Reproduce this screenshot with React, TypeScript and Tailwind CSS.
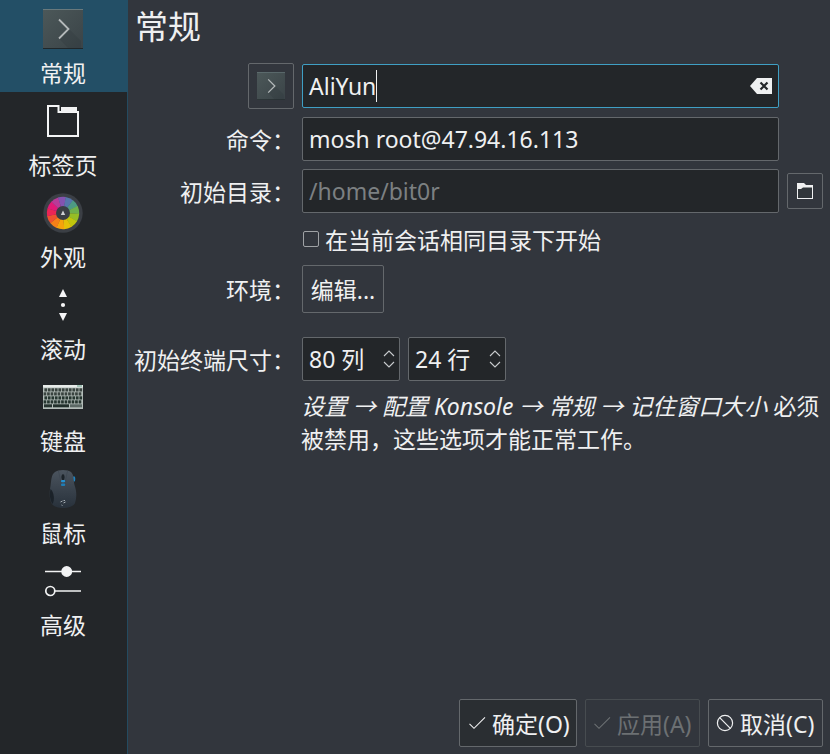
import type { ReactNode } from "react";

function TerminalIcon({ size }: { size: number }) {
  return (
    <svg width={size} height={size} viewBox="0 0 40 40">
      <defs>
        <linearGradient id="term" x1="0" y1="0" x2="1" y2="1">
          <stop offset="0" stopColor="#4c5859" />
          <stop offset="1" stopColor="#3a4347" />
        </linearGradient>
      </defs>
      <rect width="40" height="40" fill="url(#term)" />
      <path d="M16 29.5 L26 20 L38 32 V39 H25 Z" fill="#2b3236" opacity="0.22" />
      <path d="M0 .5H40" stroke="#69797c" />
      <path d="M0 39.5H40" stroke="#20272a" />
      <path d="M16 10.5 L25.5 20 L16 29.5" fill="none" stroke="#b4b9ba" strokeWidth="1.8" />
    </svg>
  );
}

function TabIcon() {
  return (
    <svg width="40" height="40" viewBox="0 0 40 40">
      <path d="M5 5H15.500V11H35V35H5Z" fill="none" stroke="#f4f5f6" strokeWidth="2" />
      <rect x="18" y="6" width="16" height="5" fill="#f0f1f2" />
    </svg>
  );
}

const WHEEL = [
  "#4d9a83", "#6fb04c", "#96bd25", "#c0c60c", "#e4c008", "#f5a30c",
  "#f58018", "#ef5130", "#ec2455", "#e01a78", "#b93a98", "#8353b0", "#5676ac",
];

function WheelIcon() {
  const step = (2 * Math.PI) / WHEEL.length;
  const at = (a: number) => `${20 + 16.2 * Math.cos(a)} ${20 + 16.2 * Math.sin(a)}`;
  // The wheel's first wedge sits at the upper right.
  const start = -Math.PI / 3.4;
  return (
    <svg width="40" height="40" viewBox="0 0 40 40">
      <circle cx="20" cy="20" r="19.700" fill="#3b3f45" />
      {WHEEL.map((color, i) => (
        <path
          key={color}
          d={`M20 20 L${at(start + i * step)} A16.2 16.2 0 0 1 ${at(start + (i + 1) * step + 0.02)} Z`}
          fill={color}
        />
      ))}
      <circle cx="20" cy="20" r="7" fill="#3a3e44" />
      <path d="M20 17.500L22.200 22H17.800Z" fill="#cfd1d3" />
    </svg>
  );
}

function ScrollIcon() {
  return (
    <svg width="40" height="40" viewBox="0 0 40 40" fill="#f6f6f7">
      <path d="M20 4L24 12H16Z" />
      <circle cx="20" cy="20" r="2.100" />
      <path d="M20 36L24 28H16Z" />
    </svg>
  );
}

function KeyboardIcon() {
  const rows = [0, 1, 2, 3];
  return (
    <svg width="40" height="40" viewBox="0 0 40 40">
      <rect x="0" y="8" width="40" height="24" fill="#b3bdb9" />
      <rect x="0" y="8" width="40" height="2.500" fill="#e8ecea" />
      <path d="M34 9H39" stroke="#5f9c85" />
      {rows.map((r) => (
        <g key={r} fill={r > 1 ? "#25352f" : "#39433f"}>
          {Array.from({ length: 11 }, (_, c) => (
            <rect key={c} x={1 + c * 3.5 - (r % 2) * 0.8 + 0.4} y={11.300 + r * 4} width="2.700" height="3.200" />
          ))}
        </g>
      ))}
      <rect x="1" y="27.300" width="8" height="3" fill="#26332f" />
      <rect x="10" y="27.300" width="16" height="3" fill="#22302b" />
      <rect x="27" y="27.300" width="12" height="3" fill="#5c6965" />
    </svg>
  );
}

function MouseIcon() {
  return (
    <svg width="40" height="40" viewBox="0 0 40 40">
      <defs>
        <linearGradient id="mouse" x1="0" y1="0" x2="0" y2="1">
          <stop offset="0" stopColor="#4b545e" />
          <stop offset="1" stopColor="#28313b" />
        </linearGradient>
      </defs>
      <path d="M30 7.500h1.500c1 0 1 4.500 0 5H30Z" fill="#1d84c2" />
      <path
        d="M12 3C15 .3 25 .3 28 3C31 6 30.500 11 31.500 16C33.600 22 34 28 32 34C29 40.500 13 40.500 9 35C6 31 6.500 22 7.500 17C8.500 11 8 6 12 3Z"
        fill="url(#mouse)"
      />
      <path d="M7.500 20C11 23 12 31 9.500 35C6.500 31 6.500 24 7.500 20Z" fill="#1b2229" />
      <path d="M15.500 2L18 14V19H22V14L24.500 2" fill="none" stroke="#3d4650" strokeWidth=".8" />
      <path d="M20 5C22 6 22 9 20.800 11H19.200C18 9 18 6 20 5Z" fill="#1c2329" />
      <rect x="18" y="11" width="4.200" height="2.300" rx="1" fill="#2492d2" />
      <rect x="18" y="14.500" width="4.200" height="2.500" rx="1" fill="#207db5" />
      <path d="M17.500 33l2-1M20.500 34l2-1M18.500 36l1 .5M20.500 31.500h1.500" stroke="#a4abb1" />
    </svg>
  );
}

function SlidersIcon() {
  return (
    <svg width="40" height="40" viewBox="0 0 40 40" stroke="#f2f3f4" strokeWidth="1.700">
      <path d="M2 10.500H38M12 30H38" />
      <circle cx="23.700" cy="10.500" r="4.600" fill="#f2f3f4" />
      <circle cx="7.300" cy="30" r="4.500" fill="none" />
    </svg>
  );
}

function CheckIcon() {
  return (
    <svg width="18" height="18" viewBox="0 0 18 18" fill="none" stroke="currentColor" strokeWidth="1.100">
      <path d="M1.500 9.800L6 14.300L17 3.300" />
    </svg>
  );
}

function CancelIcon() {
  return (
    <svg width="18" height="18" viewBox="0 0 18 18" fill="none" stroke="currentColor" strokeWidth="1.200">
      <circle cx="9" cy="9" r="7.600" />
      <path d="M3.700 3.700L14.300 14.300" />
    </svg>
  );
}

const PAGES: { label: string; icon: ReactNode }[] = [
  { label: "常规", icon: <TerminalIcon size={40} /> },
  { label: "标签页", icon: <TabIcon /> },
  { label: "外观", icon: <WheelIcon /> },
  { label: "滚动", icon: <ScrollIcon /> },
  { label: "键盘", icon: <KeyboardIcon /> },
  { label: "鼠标", icon: <MouseIcon /> },
  { label: "高级", icon: <SlidersIcon /> },
];

function Row({ label, className, children }: { label?: string; className: string; children: ReactNode }) {
  return (
    <div className={`flex items-center ${className}`}>
      <div className="mr-[7px] w-[161px] shrink-0 whitespace-nowrap pt-0.5 text-right">{label}</div>
      {children}
    </div>
  );
}

function Field({ className, children }: { className: string; children: ReactNode }) {
  return (
    <div className={`flex h-11 items-center rounded-[2px] border bg-[#232629] px-1.5 ${className}`}>
      {children}
    </div>
  );
}

function Spin({ value }: { value: string }) {
  return (
    <Field className="w-[98px] justify-between border-[#64686c] pr-[4px]">
      <span className="whitespace-nowrap pt-px">{value}</span>
      <svg width="12" height="20" viewBox="0 0 12 20" fill="none" stroke="#c9cccf" strokeWidth="1.100">
        <path d="M1 7L6 2L11 7M1 13L6 18L11 13" />
      </svg>
    </Field>
  );
}

function Button({ className, icon, children }: { className: string; icon: ReactNode; children: ReactNode }) {
  return (
    <div className={`flex h-12 items-center gap-[6px] whitespace-nowrap rounded-[2px] border ${className}`}>
      {icon}
      <span className="pt-0.5">{children}</span>
    </div>
  );
}

export default function App() {
  return (
    <div className="flex h-[754px] w-[830px] overflow-hidden bg-[#32363d] font-['Noto_Sans','Noto_Sans_CJK_SC',sans-serif] text-[23px] leading-[33px] text-[#eff0f1]">
      <nav className="w-32 shrink-0 border-r border-[#244b60] bg-[#232629]">
        {PAGES.map((page, i) => (
          <div
            key={page.label}
            className={`flex h-[92px] flex-col items-center pt-[9px] ${i === 0 ? "-mr-px bg-[#234f66] pr-0.5" : "pr-px"}`}
          >
            {page.icon}
            <div className="mt-2">{page.label}</div>
          </div>
        ))}
      </nav>
      <main className="flex min-w-0 flex-1 flex-col pl-[6px] pr-[7px]">
        <h1 className="h-[63px] pt-[3px] pl-px text-[33px] leading-[48px]">常规</h1>
        <div className="flex h-[46px] items-center">
          <div className="ml-[114px] mr-2 flex size-[46px] items-center justify-center rounded-[2px] border border-[#64686c]">
            <TerminalIcon size={28} />
          </div>
          <Field className="w-[477px] border-[#3f9fc4]">
            <span>AliYun</span>
            <span className="h-8 w-px bg-[#eff0f1]" />
            <svg className="ml-auto" width="22" height="16" viewBox="0 0 22 16">
              <path d="M0 8L7 0H22V16H7Z" fill="#eff0f1" />
              <path d="M10.500 4.500L17.500 11.500M17.500 4.500L10.500 11.500" stroke="#232629" strokeWidth="2.200" />
            </svg>
          </Field>
        </div>
        <Row label="命令：" className="mt-2">
          <Field className="w-[477px] border-[#64686c]">mosh root@47.94.16.113</Field>
        </Row>
        <Row label="初始目录：" className="mt-2">
          <Field className="w-[477px] border-[#64686c] text-[#7c8082]">/home/bit0r</Field>
          <div className="ml-2 flex size-9 items-center justify-center rounded-[2px] border border-[#64686c]">
            <svg width="16" height="16" viewBox="0 0 16 16">
              <path d="M0 0H7L9 2H16V16H0Z" fill="#eff0f1" />
              <path d="M1 6H4L6 4.500H15V15H1Z" fill="#31363b" />
            </svg>
          </div>
        </Row>
        <Row className="mt-[11px] h-8">
          <span className="mb-0.5 ml-px mr-[6px] size-4 rounded-[2px] border border-[#9fa2a5]" />
          <span>在当前会话相同目录下开始</span>
        </Row>
        <Row label="环境：" className="mt-[9px]">
          <div className="flex h-12 w-[82px] items-center justify-center rounded-[2px] border border-[#64686c] pt-0.5">编辑...</div>
        </Row>
        <Row label="初始终端尺寸：" className="mt-6">
          <div className="flex gap-2">
            <Spin value="80 列" />
            <Spin value="24 行" />
          </div>
        </Row>
        <p className="ml-[167px] mt-[9px] whitespace-nowrap">
          <em>设置 → 配置 Konsole → 常规 → 记住窗口大小</em> 必须
          <br />
          被禁用，这些选项才能正常工作。
        </p>
        <div className="mt-auto mb-[7px] flex justify-end gap-2">
          <Button className="w-[118px] border-[#64686c] bg-[#2a2e32] pl-2" icon={<CheckIcon />}>确定(O)</Button>
          <Button className="w-[115px] border-[#474c50] pl-[7px] text-[#6c7073]" icon={<CheckIcon />}>应用(A)</Button>
          <Button className="w-[115px] border-[#64686c] pl-[7px]" icon={<CancelIcon />}>取消(C)</Button>
        </div>
      </main>
    </div>
  );
}
